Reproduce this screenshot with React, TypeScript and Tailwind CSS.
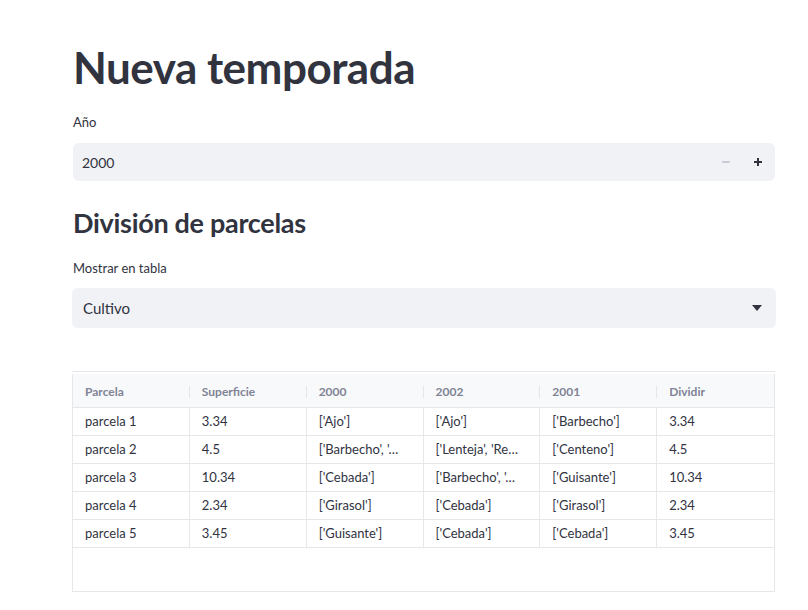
import React from "react";

const rows = [
  ["parcela 1", "3.34", "['Ajo']", "['Ajo']", "['Barbecho']", "3.34"],
  ["parcela 2", "4.5", "['Barbecho', '…", "['Lenteja', 'Re…", "['Centeno']", "4.5"],
  ["parcela 3", "10.34", "['Cebada']", "['Barbecho', '…", "['Guisante']", "10.34"],
  ["parcela 4", "2.34", "['Girasol']", "['Cebada']", "['Girasol']", "2.34"],
  ["parcela 5", "3.45", "['Guisante']", "['Cebada']", "['Cebada']", "3.45"],
];

const headers = ["Parcela", "Superficie", "2000", "2002", "2001", "Dividir"];

export default function App() {
  return (
    <div
      className="min-h-screen bg-white text-[#31333f]"
      style={{ fontFamily: "Lato, 'Noto Sans', sans-serif" }}
    >
      <div className="ml-[72px] w-[704px] pt-[40px]">
        {/* TITLE */}
        <h1 className="h-[54px] pl-px text-[44px] font-bold leading-[54px] tracking-[-0.5px]">
          Nueva temporada
        </h1>

        {/* YEAR INPUT */}
        <div className="mt-[18px] h-[21px] pl-px text-[13px] leading-[21px]">Año</div>
        <div className="ml-px mt-[10px] flex h-[38px] w-[702px] items-center rounded-md bg-[#f0f2f6]">
          <span className="flex-1 pl-[9px] text-[14px]">2000</span>
          <button className="flex h-full w-[32px] items-center justify-center">
            <span className="h-[2px] w-[8px] rounded bg-[#c9cbd4]" />
          </button>
          <button className="mr-[1px] flex h-full w-[32px] items-center justify-center">
            <svg width="10" height="10" viewBox="0 0 10 10">
              <path d="M5 1v8M1 5h8" stroke="#31333f" strokeWidth="2" />
            </svg>
          </button>
        </div>

        {/* SUBHEADING */}
        <h2 className="mt-[24px] h-[36px] pl-px text-[27px] font-bold leading-[36px] tracking-[-0.3px]">
          División de parcelas
        </h2>

        <div className="mt-[17px] h-[21px] pl-px text-[13px] leading-[21px]">Mostrar en tabla</div>
        <div className="mt-[9px] flex h-[40px] w-[704px] items-center rounded-md bg-[#f0f2f6]">
          <span className="flex-1 pl-[11px] text-[15px]">Cultivo</span>
          <svg className="mr-[14px]" width="10" height="6" viewBox="0 0 10 6">
            <path d="M0 0h10L5 6z" fill="#31333f" />
          </svg>
        </div>

        {/* TABLE */}
        <div className="mt-[43px] w-[703px] border-t border-[#e6e7eb] pt-[2px]">
          <div className="h-[218px] border-x border-b border-[#e6e7eb]">
            <div className="grid h-[34px] grid-cols-6 border-b border-[#e6e7eb] bg-[#f8f9fb]">
              {headers.map((h, i) => (
                <div key={h} className="flex items-center justify-between pt-[2px]">
                  <span className="pl-[12px] text-[12px] font-bold text-[#808495]">{h}</span>
                  {i < 5 && <span className="h-[12px] w-px bg-[#e6e7eb]" />}
                </div>
              ))}
            </div>
            {rows.map((r) => (
              <div key={r[0]} className="grid h-[28px] grid-cols-6 border-b border-[#e6e7eb]">
                {r.map((c, i) => (
                  <div
                    key={i}
                    className={`flex items-center whitespace-nowrap px-[12px] pt-[1px] text-[13px] ${i < 5 ? "border-r border-[#e6e7eb]" : ""}`}
                  >
                    {c}
                  </div>
                ))}
              </div>
            ))}
          </div>
        </div>
      </div>
    </div>
  );
}
